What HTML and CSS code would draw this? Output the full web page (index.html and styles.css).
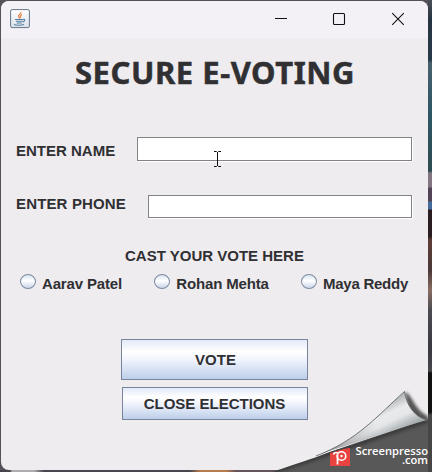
FILE: index.html
```html
<!DOCTYPE html>
<html lang="en">
<head>
<meta charset="utf-8">
<title>Secure E-Voting</title>
<link rel="stylesheet" href="styles.css">
</head>
<body>
<main class="window">
  <header class="titlebar">
    <svg class="java" viewBox="0 0 20 20" width="20" height="20">
      <defs><linearGradient id="tile" x2="0" y2="1"><stop stop-color="#fff"/><stop offset="1" stop-color="#d9e0ea"/></linearGradient></defs>
      <rect x=".6" y=".6" width="18.800" height="18" rx="1.500" fill="url(#tile)" stroke="#657789"/>
      <path d="M11 3c.5 2-3.500 2.600-2.400 4.500l1.200 2M12 5.500c-2.500 1-1.200 2-1.800 3.600" fill="none" stroke="#e5894c" stroke-width="1.300"/>
      <path d="M5 10.500h8M6 12.300h6.500M6.700 14h5M13 10.300c3-.5 1.700 2.400-.5 2.700M4 15.600c2 .8 7.500.8 10 0" fill="none" stroke="#5880a5" stroke-width="1.100"/>
    </svg>
    <div class="controls">
      <svg viewBox="0 0 12 12" width="12" height="12"><path d="M0 5.500h12"/></svg>
      <svg viewBox="0 0 12 12" width="12" height="12"><rect x=".5" y=".5" width="11" height="11" rx="1"/></svg>
      <svg viewBox="0 0 12 12" width="12" height="12"><path d="M.2.2l11.600 11.600M11.800.2L.2 11.800"/></svg>
    </div>
  </header>
  <h1 class="title">SECURE E-VOTING</h1>
  <form class="form">
    <label class="field name"><span>ENTER NAME</span><input type="text"></label>
    <label class="field phone"><span>ENTER PHONE</span><input type="text"></label>
    <p class="prompt">CAST YOUR VOTE HERE</p>
    <div class="options">
      <label><input type="radio" name="vote"><span>Aarav Patel</span></label>
      <label><input type="radio" name="vote"><span>Rohan Mehta</span></label>
      <label><input type="radio" name="vote"><span>Maya Reddy</span></label>
    </div>
    <div class="actions">
      <button class="vote" type="button">VOTE</button>
      <button class="close" type="button">CLOSE ELECTIONS</button>
    </div>
  </form>
</main>
<svg class="cursor" viewBox="0 0 7 16" width="7" height="16"><path d="M0 .5h2.500l1 1 1-1H7M3.500 1v14M0 15.500h2.500l1-1 1 1H7"/></svg>
<div class="curl">
  <svg viewBox="0 0 160 92" width="160" height="92">
    <defs>
      <linearGradient id="paper" gradientUnits="userSpaceOnUse" x1="108" y1="27" x2="122" y2="56"><stop stop-color="#b9bcbe"/><stop offset=".3" stop-color="#e9eaeb"/><stop offset=".55" stop-color="#e4e6e8"/><stop offset=".8" stop-color="#b9bec0"/><stop offset="1" stop-color="#9a9fa1"/></linearGradient>
      <linearGradient id="fade" gradientUnits="userSpaceOnUse" x1="50" y1="70" x2="105" y2="48"><stop stop-color="#888"/><stop offset="1" stop-color="#aaa" stop-opacity="0"/></linearGradient>
      <filter id="soft" x="-20%" y="-20%" width="140%" height="140%"><feGaussianBlur stdDeviation="1.800"/></filter>
      <clipPath id="page"><path d="M0 0h156v92H0z"/></clipPath>
      <clipPath id="under"><path d="M0 92C24 84 40 79 55 73L156 38v54z"/></clipPath>
    </defs>
    <g clip-path="url(#page)">
      <path d="M133 12c7 2 10 19 23 24v5L138 42z" fill="#444" opacity=".9" filter="url(#soft)"/>
      <path d="M0 92C24 84 40 79 55 73L156 39v53z" fill="#585858"/>
      <g clip-path="url(#under)"><path d="M2 91C29 82 42 78 60 72L155 40" fill="none" stroke="#202020" stroke-width="6" opacity=".5" filter="url(#soft)"/></g>
      <path d="M50 73C86 60 106 35 132.500 11.500c2 13 9 25 22.500 28.500C120 50 88 62 50 73z" fill="url(#paper)"/>
      <path d="M50 73C86 60 106 35 132.500 11.500c2 13 9 25 22.500 28.500C120 50 88 62 50 73z" fill="url(#fade)"/>
      <path d="M44 76C86 60 106 35 132.500 11.500c2 13 9 25 22.500 28.500" fill="none" stroke="#62676a" stroke-width=".9"/>
    </g>
    <path d="M58 73c6-1 10-4 20-5v18H58z" fill="#e94340"/>
    <path d="M65.500 84.500V75M61.500 74.500c.5-2 2.500-2.500 4-1.500" fill="none" stroke="#fff" stroke-width="1.700"/>
    <circle cx="69.500" cy="76" r="4.300" fill="none" stroke="#fff" stroke-width="1.600"/>
    <circle cx="69.500" cy="76" r="1.200" fill="#fff"/>
  </svg>
  <div class="brand"><span>Screenpresso</span><span>.com</span></div>
</div>
</body>
</html>
```
FILE: styles.css
```css
* { box-sizing: border-box; }
body {
  margin: 0;
  width: 432px;
  height: 472px;
  padding: 1px 4px 2px 1px;
  overflow: hidden;
  position: relative;
  background:
    linear-gradient(90deg, #46434b 0 10px, #b0aab1 12px 34px, #49454e 44px 190px, #b77b4c 200px 226px, #65535a 236px 270px, #414141 290px) 0 470px / 428px 2px no-repeat,
    linear-gradient(#4b4d57 0, #263442 20px, #273a48 60px, #48606e 63px, #2d5665 115px, #2d4c50 171px, #817681 173px 187px, #514456 188px 201px, #456b9c 202px 209px, #291d21 210px 236px, #5f3d36 240px, #493838 270px, #886d62 290px, #4c4b51 310px, #38383e 350px, #48474c 371px, #111 373px 412px, #464646 415px) 428px 0 / 4px 472px no-repeat,
    #55515a;
  color: #303033;
  font: bold 15px/18px "Liberation Sans", Arial, sans-serif;
}
.window {
  width: 427px;
  height: 469px;
  border-radius: 8px 8px 0 8px;
  background: #efecef;
  overflow: hidden;
}
.titlebar {
  height: 37px;
  padding: 8px 24px 0 9px;
  display: flex;
  justify-content: space-between;
  background: #f4f1f6;
}
.controls { display: flex; gap: 46.500px; padding-top: 4px; }
.controls svg { fill: none; stroke: #111; stroke-width: 1.100; overflow: visible; }
.controls svg:nth-child(2) { margin: 0 .5px 0 -.5px; }
.title {
  margin: 13px 0 0;
  padding-left: 1px;
  height: 42px;
  text-align: center;
  white-space: nowrap;
  font: bold 31px/42px "Noto Sans", sans-serif;
  letter-spacing: .55px;
  -webkit-text-stroke: .5px #303033;
}
.form { padding: 1px 15px 0; }
.field { display: flex; justify-content: space-between; }
.field span { white-space: nowrap; }
.field input {
  margin: 0;
  padding: 0 3px;
  border: 1px solid #838287;
  border-radius: 0;
  background: #fff;
  box-shadow: 1px 1px #fff;
  outline: 0;
}
.name { margin-top: 43px; height: 24px; }
.name span { padding-top: 5px; }
.name input { width: 275px; height: 24px; }
.phone { margin-top: 34px; height: 23px; letter-spacing: .15px; }
.phone input { width: 264px; height: 23px; }
.name, .phone { width: 396px; }
.prompt { margin: 29px 0 0; text-align: center; }
.options { display: flex; justify-content: space-between; margin: 9px -10px 0 4px; width: 388px; height: 20px; letter-spacing: -.15px; }
.options label { display: flex; gap: 6px; white-space: nowrap; }
.options label:last-child { letter-spacing: -.25px; }
.options span { padding-top: 1px; }
.options input {
  appearance: none;
  margin: 0;
  width: 16px;
  height: 15px;
  border: 1px solid #7d8a9e;
  border-radius: 50%;
  background: linear-gradient(#d9e4f2, #fff 45%, #c8d5ea);
}
.actions { display: flex; flex-direction: column; align-items: center; gap: 7px; margin-top: 45px; }
.actions button {
  border: 1px solid #78859d;
  padding: 0;
  color: #303033;
  font: inherit;
  background: linear-gradient(#e2e9f7, #fff 30%, #f1f4fd 50%, #bdcfe9);
}
.actions .vote { width: 187px; height: 41px; padding-left: 2px; }
.actions .close { width: 186px; height: 33px; }
.cursor { position: absolute; left: 214px; top: 151px; fill: none; stroke: #111; stroke-width: 1; }
.curl { position: absolute; left: 272px; top: 380px; width: 160px; height: 92px; }
.curl svg { display: block; }
.brand {
  position: absolute;
  right: 4px;
  top: 66px;
  display: flex;
  flex-direction: column;
  align-items: flex-end;
  color: #fff;
  font: 600 11.200px/9px "Open Sans", sans-serif;
}
```
